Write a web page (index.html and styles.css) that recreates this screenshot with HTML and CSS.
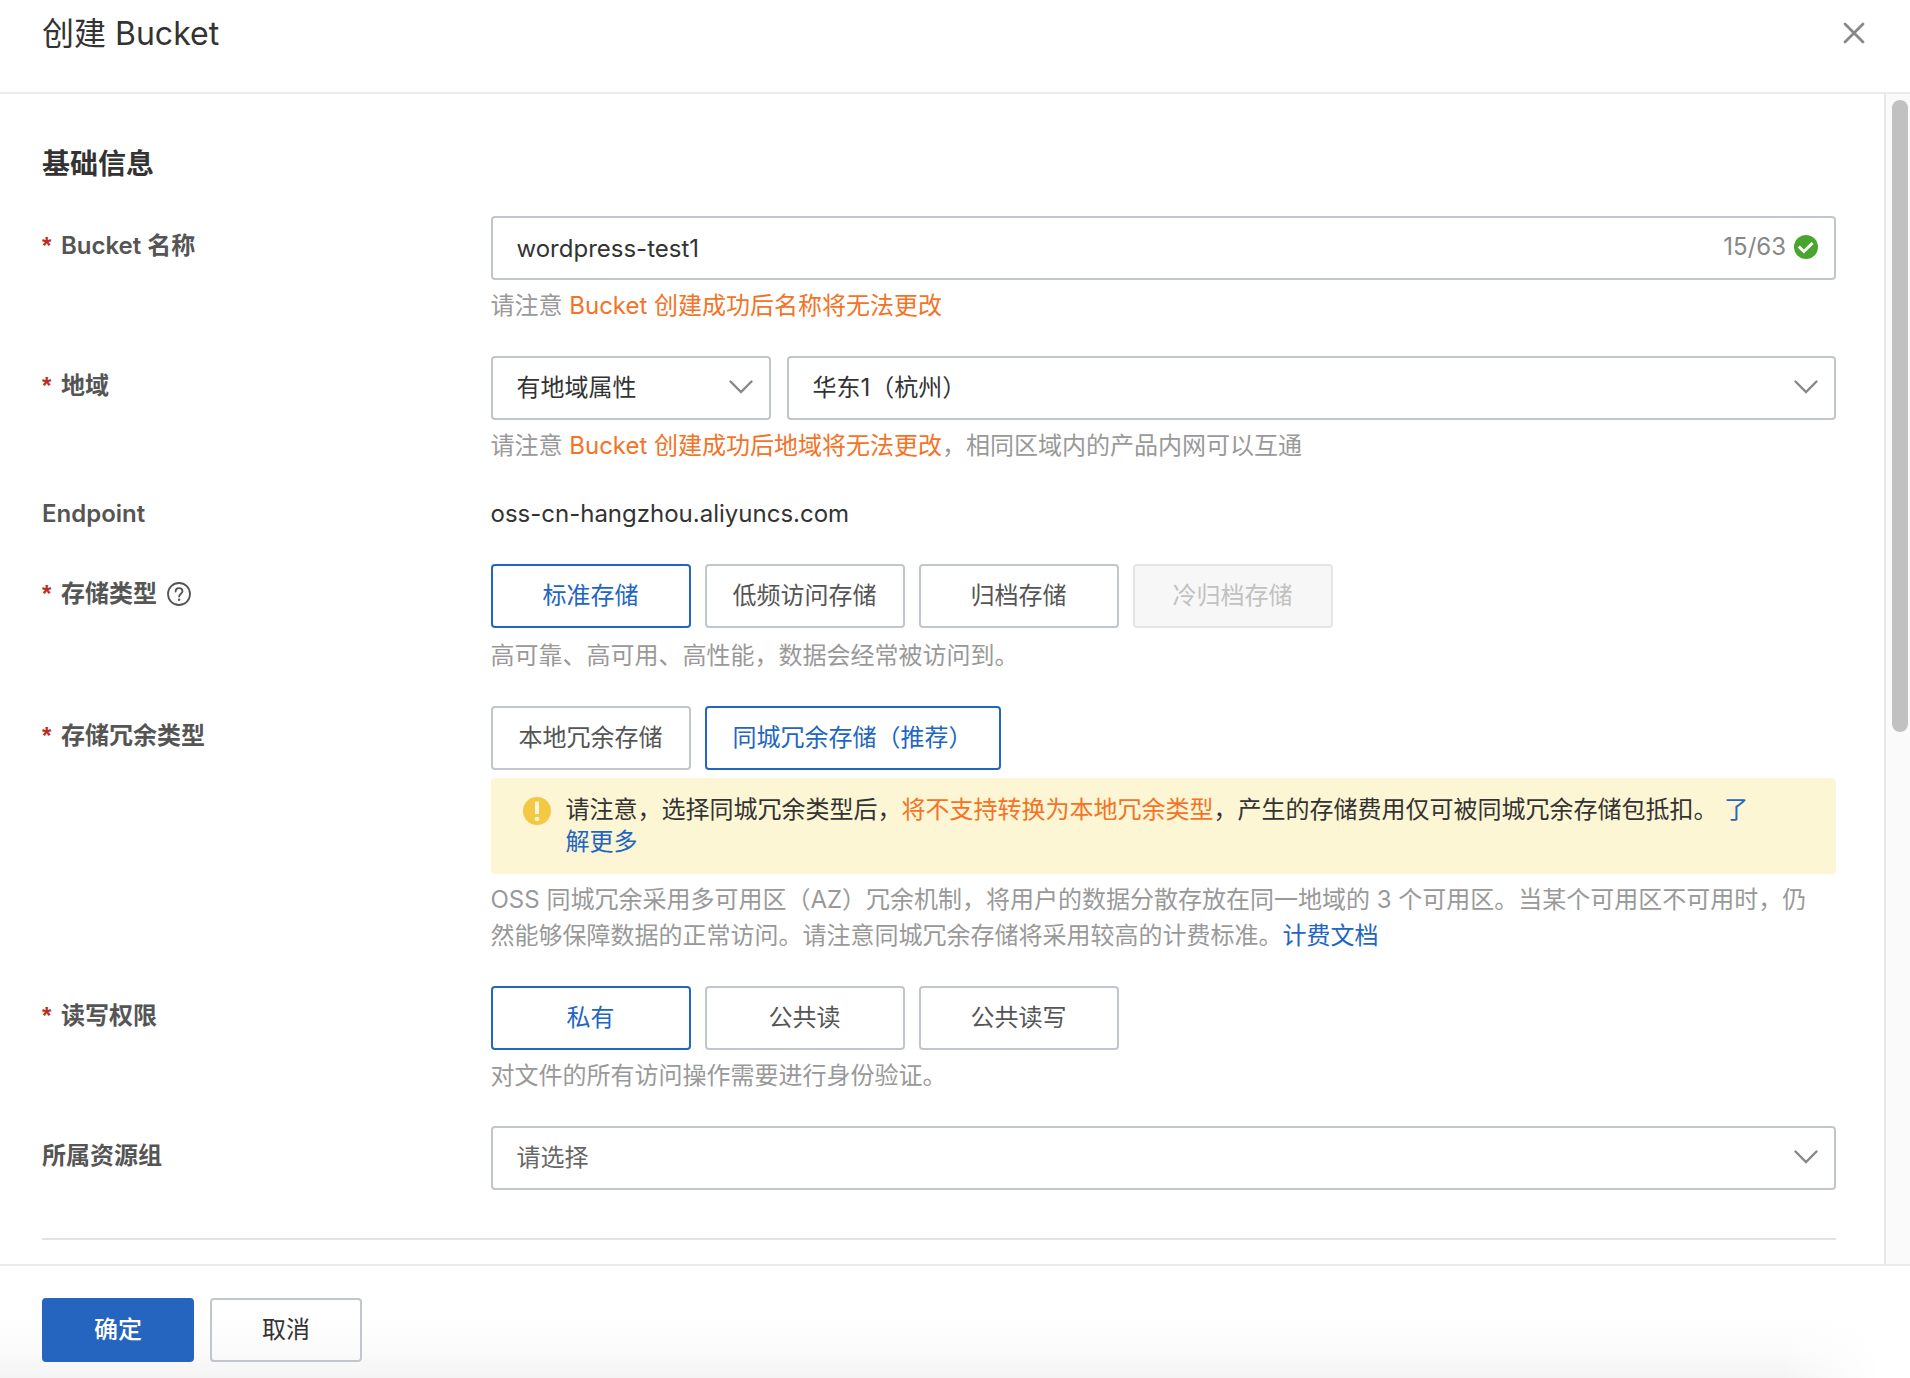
FILE: index.html
```html
<!DOCTYPE html>
<html lang="zh-CN">
<head>
<meta charset="utf-8">
<title>创建 Bucket</title>
<link rel="stylesheet" href="styles.css">
</head>
<body>
<form class="drawer">
  <header class="drawer-header">
    <h1 class="drawer-title">创建 Bucket</h1>
    <button class="close" type="button" aria-label="关闭">
      <svg width="24" height="24" viewBox="0 0 24 24" fill="none" stroke="#888" stroke-width="2.8" stroke-linecap="round"><path d="M3 3l18 18M21 3L3 21"/></svg>
    </button>
  </header>

  <div class="drawer-body">
    <main class="content">
      <h2 class="section-title">基础信息</h2>

      <div class="fields">
        <div class="field">
          <label class="label" for="name"><span class="required">*</span>Bucket 名称</label>
          <div class="control">
            <div class="box">
              <input class="input" id="name" type="text" value="wordpress-test1">
              <span class="status">
                <span>15/63</span>
                <svg width="24" height="24" viewBox="0 0 24 24"><circle cx="12" cy="12" r="12" fill="#4aa52e"/><path d="M4.800 11.500l5 5L18.600 8" fill="none" stroke="#fff" stroke-width="3"/></svg>
              </span>
            </div>
            <p class="help">请注意 <span class="warn">Bucket 创建成功后名称将无法更改</span></p>
          </div>
        </div>

        <div class="field">
          <label class="label" for="region"><span class="required">*</span>地域</label>
          <div class="control">
            <div class="select-row">
              <div class="box">
                <select class="input" aria-label="地域属性"><option>有地域属性</option></select>
                <svg class="arrow" width="24" height="14" viewBox="0 0 24 14" fill="none" stroke="#888" stroke-width="2.400" stroke-linecap="round"><path d="M1.500 1.500L12 12L22.500 1.500"/></svg>
              </div>
              <div class="box">
                <select class="input" id="region"><option>华东1（杭州）</option></select>
                <svg class="arrow" width="24" height="14" viewBox="0 0 24 14" fill="none" stroke="#888" stroke-width="2.400" stroke-linecap="round"><path d="M1.500 1.500L12 12L22.500 1.500"/></svg>
              </div>
            </div>
            <p class="help">请注意 <span class="warn">Bucket 创建成功后地域将无法更改</span>，相同区域内的产品内网可以互通</p>
          </div>
        </div>

        <div class="field">
          <span class="label label-plain">Endpoint</span>
          <div class="value">oss-cn-hangzhou.aliyuncs.com</div>
        </div>

        <div class="field">
          <span class="label">
            <span class="required">*</span>存储类型
            <svg class="hint" width="24" height="24" viewBox="0 0 24 24" fill="none" stroke="#555" stroke-width="1.800"><circle cx="12" cy="12" r="11"/><path d="M8.600 9.600C8.600 7.500 10 6.200 12 6.200s3.500 1.200 3.500 3.100c0 2.300-3.400 2.700-3.400 5.300" stroke-linecap="round"/><circle cx="12.100" cy="17.800" r="1.200" fill="#555" stroke="none"/></svg>
          </span>
          <div class="control control-loose">
            <div class="choices" role="group" aria-label="存储类型">
              <button class="choice selected" type="button">标准存储</button>
              <button class="choice" type="button">低频访问存储</button>
              <button class="choice" type="button">归档存储</button>
              <button class="choice" type="button" disabled>冷归档存储</button>
            </div>
            <p class="help">高可靠、高可用、高性能，数据会经常被访问到。</p>
          </div>
        </div>

        <div class="field">
          <span class="label"><span class="required">*</span>存储冗余类型</span>
          <div class="control">
            <div class="choices" role="group" aria-label="存储冗余类型">
              <button class="choice" type="button">本地冗余存储</button>
              <button class="choice selected" type="button">同城冗余存储（推荐）</button>
            </div>
            <div class="alert">
              <svg class="alert-icon" width="28" height="28" viewBox="0 0 28 28"><circle cx="14" cy="14" r="14" fill="#f3c844"/><path d="M12 4.500h4v12.500h-4z" fill="#fdf6d4"/><circle cx="14" cy="22" r="2.300" fill="#fdf6d4"/></svg>
              <p class="alert-text">请注意，选择同城冗余类型后，<span class="warn">将不支持转换为本地冗余类型</span>，产生的存储费用仅可被同城冗余存储包抵扣。 <a class="link" href="#">了解更多</a></p>
            </div>
            <p class="help help-long">OSS 同城冗余采用多可用区（AZ）冗余机制，将用户的数据分散存放在同一地域的 3 个可用区。当某个可用区不可用时，仍然能够保障数据的正常访问。请注意同城冗余存储将采用较高的计费标准。<a class="link" href="#">计费文档</a></p>
          </div>
        </div>

        <div class="field">
          <span class="label"><span class="required">*</span>读写权限</span>
          <div class="control">
            <div class="choices" role="group" aria-label="读写权限">
              <button class="choice selected" type="button">私有</button>
              <button class="choice" type="button">公共读</button>
              <button class="choice" type="button">公共读写</button>
            </div>
            <p class="help">对文件的所有访问操作需要进行身份验证。</p>
          </div>
        </div>

        <div class="field">
          <label class="label" for="group">所属资源组</label>
          <div class="box">
            <select class="input placeholder" id="group"><option>请选择</option></select>
            <svg class="arrow" width="24" height="14" viewBox="0 0 24 14" fill="none" stroke="#888" stroke-width="2.400" stroke-linecap="round"><path d="M1.500 1.500L12 12L22.500 1.500"/></svg>
          </div>
        </div>
      </div>

      <hr class="divider">
    </main>
    <div class="scrollbar" aria-hidden="true"><div class="thumb"></div></div>
  </div>

  <footer class="drawer-footer">
    <button class="action primary" type="submit">确定</button>
    <button class="action" type="button">取消</button>
  </footer>
</form>
</body>
</html>
```
FILE: styles.css
```css
* { box-sizing: border-box; }

body {
  margin: 0;
  color: #333;
  background: #fff;
  font-family: Inter, "Noto Sans CJK SC", sans-serif;
  font-size: 24px;
  line-height: 36px;
}

h1, h2, p { margin: 0; }

button, input, select { font: inherit; color: inherit; }
svg { display: block; flex: none; }

.drawer { display: flex; flex-direction: column; height: 100vh; }

.drawer-header {
  display: flex;
  justify-content: space-between;
  align-items: flex-start;
  height: 94px;
  padding: 10px 44px 0 42px;
  border-bottom: 2px solid #ebebeb;
}
.drawer-title { font-size: 32px; line-height: 48px; font-weight: 400; }
.close { padding: 11px 0; border: 0; background: none; }

.drawer-body { display: flex; flex: 1; min-height: 0; }
.content { flex: 1; min-width: 0; padding: 50px 48px 24px 42px; overflow: hidden; }
.scrollbar { width: 26px; padding: 6px 2px 6px 6px; border-left: 2px solid #e8e8e8; background: #fafafa; }
.thumb { height: 54.600%; border-radius: 8px; background: #c1c1c1; }

.section-title { margin-bottom: 32px; font-size: 28px; line-height: 40px; font-weight: 600; }

.fields { display: grid; gap: 32px; }
.field { display: grid; grid-template-columns: minmax(0, 1fr) minmax(0, 3fr); }

.label { display: flex; align-items: center; align-self: start; padding-top: 12px; color: #555; font-weight: 600; }
.label-plain { padding-top: 0; }
.required { width: 19px; color: #c22b1c; font-family: "Liberation Sans", sans-serif; font-weight: 700; }
.hint { margin-left: 10px; }

.control { display: grid; gap: 8px; }
.control-loose { gap: 10px; }

.box { position: relative; }
.input {
  display: block;
  width: 100%;
  height: 64px;
  padding: 0 56px 0 24px;
  border: 2px solid #c0c6cc;
  border-radius: 4px;
  background: #fff;
  appearance: none;
}
.placeholder { color: #666; }
.arrow { position: absolute; top: 24px; right: 18px; pointer-events: none; }
.status { position: absolute; top: 0; right: 18px; display: flex; align-items: center; gap: 8px; height: 62px; color: #888; }

.select-row { display: grid; grid-template-columns: 280px 1fr; gap: 16px; }

.help { color: #999; }
.warn { color: #f37327; }
.link { color: #2265c3; text-decoration: none; }

.choices { display: flex; gap: 14px; }
.choice {
  min-width: 200px;
  height: 64px;
  padding: 0 26px;
  border: 2px solid #c0c6cc;
  border-radius: 4px;
  background: #fff;
  color: #555;
}
.choice.selected { border-color: #2265c3; color: #2265c3; }
.choice:disabled { border-color: #e5e5e5; background: #f7f7f7; color: #c1c1c1; }

.alert { display: flex; gap: 15px; padding: 16px 72px 16px 32px; border-radius: 4px; background: #fdf6d4; line-height: 32px; }
.alert-icon { margin-top: 3px; }
.help-long { padding-right: 16px; }

.divider { height: 2px; margin: 48px 0 0; border: 0; background: #e3e3e3; }

.drawer-footer {
  display: flex;
  gap: 16px;
  padding: 32px 42px 16px;
  border-top: 2px solid #ebebeb;
  background:
    linear-gradient(to right, transparent calc(100% - 130px), #fff calc(100% - 30px)),
    linear-gradient(to bottom, #fff 40%, #fbfbfb 75%, #f4f4f4);
}
.action {
  width: 152px;
  height: 64px;
  border: 2px solid #c0c6cc;
  border-radius: 4px;
  background: none;
}
.action.primary { border-color: #2565c0; background: #2565c0; color: #fff; font-weight: 500; }
```
